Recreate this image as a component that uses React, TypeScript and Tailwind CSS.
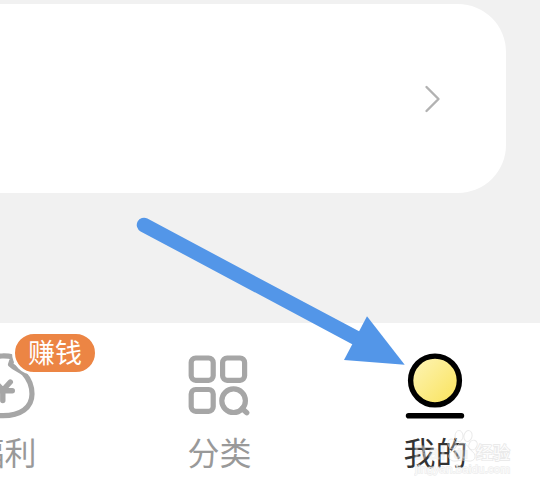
import type { ReactNode } from 'react';

interface TabProps {
  label: string;
  icon: ReactNode;
  active?: boolean;
  badge?: string;
}

function WelfareIcon() {
  return (
    <svg width="72" height="72" viewBox="0 0 72 72" fill="none" stroke="#a6a6a6" strokeWidth="5.200" strokeLinecap="round" strokeLinejoin="round">
      <path d="M34 5Q40 4.800 45 6L42.500 13.500C46 17 51 18.500 56 22.500C61 28 64 36 64 43C64 57 52 64.700 35 64.700C18 64.700 6 57 6 43C6 31 13 21 27 14L24 6Q28 5 34 5" />
      <path d="M27 31L34.800 39.200L42.300 31M34.800 39.200V49.500M25 39.700H44.300" strokeWidth="5.400" />
    </svg>
  );
}

function CategoryIcon() {
  return (
    <svg width="72" height="72" viewBox="0 0 72 72" fill="none" stroke="#a6a6a6" strokeWidth="5.200">
      <rect x="7.200" y="7" width="22" height="22.300" rx="4.500" />
      <rect x="38.600" y="7" width="22" height="22.300" rx="4.500" />
      <rect x="7.200" y="38.500" width="22" height="21.800" rx="4.500" />
      <circle cx="49.600" cy="49.700" r="11.800" />
      <path d="M58 57.500L62.800 61.800" strokeLinecap="round" />
    </svg>
  );
}

function ProfileIcon() {
  return (
    <svg width="72" height="72" viewBox="0 0 72 72" fill="none" stroke="#000">
      <defs>
        <linearGradient id="face" x1="0" y1="0" x2="1" y2="1">
          <stop offset="0.100" stopColor="#fdf3b0" />
          <stop offset="0.900" stopColor="#fae461" />
        </linearGradient>
      </defs>
      <circle cx="35" cy="29.500" r="24.400" fill="url(#face)" strokeWidth="5.400" />
      <path d="M8.600 64.700H61.400" strokeWidth="5.600" strokeLinecap="round" />
    </svg>
  );
}

function Tab({ label, icon, active = false, badge }: TabProps) {
  return (
    <button className="relative flex w-[216px] flex-col items-center pt-7">
      {icon}
      <span className={`mt-2 text-[32px] leading-10 ${badge ? 'pl-px' : 'pr-px'} ${active ? 'text-[#333]' : 'text-[#999]'}`}>{label}</span>
      {badge && (
        <span className="absolute left-[116px] top-2 flex h-[44px] w-[86px] items-center justify-center rounded-full border-3 border-white bg-[#ec8544] pb-[3px] text-[27px] leading-none text-white">
          {badge}
        </span>
      )}
    </button>
  );
}

function Arrow() {
  return (
    <svg className="pointer-events-none absolute left-0 top-0" width="540" height="488" viewBox="0 0 540 488">
      <path d="M144 225L358 339" stroke="#5396e8" strokeWidth="14.500" strokeLinecap="round" />
      <path d="M367 316.300L404.700 364.700L344 360Z" fill="#5396e8" />
    </svg>
  );
}

function Watermark() {
  return (
    <div className="pointer-events-none absolute left-[414px] top-[430px] h-[48px] w-[98px]">
      <svg className="absolute left-0 top-0" width="98" height="48" viewBox="0 0 98 48" fill="#fff" fillOpacity="0.250" stroke="#dcdcdc" strokeOpacity="0.600">
        <ellipse cx="38" cy="14" rx="4" ry="5" transform="rotate(-20 38 14)" />
        <ellipse cx="45" cy="6" rx="4" ry="5.500" />
        <ellipse cx="54" cy="6" rx="4" ry="5.500" transform="rotate(12 54 6)" />
        <ellipse cx="59" cy="15" rx="4" ry="5" transform="rotate(25 59 15)" />
        <path d="M48 13C43 13 42 19 37 22C32 26 36 32 42 31Q48 29 54 31C61 32 63 26 59 22C54 19 54 13 48 13Z" />
        <g fontFamily="Liberation Sans, Noto Sans CJK SC, sans-serif" strokeWidth="1.800" paintOrder="stroke">
          <g fillOpacity="0.250" strokeOpacity="0.350">
            <text x="0" y="29" fontSize="19" textLength="31">Bai</text>
            <text x="40" y="28" fontSize="12">du</text>
          </g>
          <text x="62" y="29" fontSize="17" fillOpacity="0.900">经验</text>
        </g>
        <text x="1" y="43" fontFamily="Liberation Sans, sans-serif" fontSize="11.500" textLength="95" fillOpacity="0.800" strokeOpacity="0.500" strokeWidth="1.400" paintOrder="stroke">jingyan.baidu.com</text>
      </svg>
    </div>
  );
}

export default function App() {
  return (
    <div className="relative flex h-[488px] w-[540px] flex-col overflow-hidden bg-[#f1f1f1] pt-1 font-['Noto_Sans_CJK_SC',sans-serif]">
      <section className="flex h-[189px] w-[506px] items-center justify-end rounded-r-[48px] bg-white pr-[65px]">
        <svg width="17" height="28" viewBox="0 0 17 28" fill="none" stroke="#b2b2b2" strokeWidth="2.400" strokeLinecap="round" strokeLinejoin="round">
          <path d="M2.500 2L14.500 14L2.500 26" />
        </svg>
      </section>
      <nav className="-ml-[104px] mt-[130px] flex h-[165px] w-[648px] shrink-0 bg-white">
        <Tab label="福利" icon={<WelfareIcon />} badge="赚钱" />
        <Tab label="分类" icon={<CategoryIcon />} />
        <Tab label="我的" icon={<ProfileIcon />} active />
      </nav>
      <Arrow />
      <Watermark />
    </div>
  );
}
